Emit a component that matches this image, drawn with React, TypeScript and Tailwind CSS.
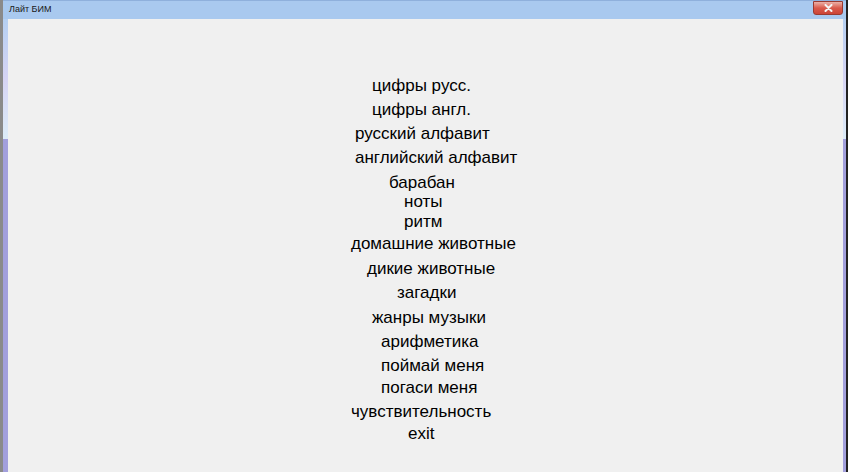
import React from "react";

const items: { label: string; left: number; top: number }[] = [
  { label: "цифры русс.", left: 372, top: 0 },
  { label: "цифры англ.", left: 372, top: 24 },
  { label: "русский алфавит", left: 355, top: 24 },
  { label: "английский алфавит", left: 355, top: 24 },
  { label: "барабан", left: 389, top: 25 },
  { label: "ноты", left: 404, top: 19 },
  { label: "ритм", left: 404, top: 20 },
  { label: "домашние животные", left: 351, top: 22 },
  { label: "дикие животные", left: 367, top: 25 },
  { label: "загадки", left: 397, top: 24 },
  { label: "жанры музыки", left: 372, top: 25 },
  { label: "арифметика", left: 381, top: 24 },
  { label: "поймай меня", left: 381, top: 24 },
  { label: "погаси меня", left: 381, top: 22 },
  { label: "чувствительность", left: 351, top: 24 },
  { label: "exit", left: 408, top: 22 },
];

export default function App() {
  return (
    <div className="w-[848px] h-[472px] flex bg-[#f0f0f0] overflow-hidden">
      <div className="w-[3px] bg-[#8a8a8a]" />
      <div className="flex-1 flex flex-col">
        {/* title bar */}
        <div className="h-[19px] bg-[#a9c9ef] flex items-start justify-between border-t border-[#8fb0dc]">
          <span
            className="pl-[6px] pt-[2px] text-[9px] leading-[12px] text-[#1a1a1a]"
            style={{ fontFamily: '"Liberation Sans", Arial, sans-serif' }}
          >
            Лайт БИМ
          </span>
          <div className="mr-[3px] w-[30px] h-[14px] rounded-b-[3px] border border-[#9a3a30] bg-gradient-to-b from-[#eab0a8] via-[#d9594b] to-[#cc4436] flex items-center justify-center">
            <svg width="9" height="8" viewBox="0 0 9 8">
              <path d="M1.5 1 L7.5 7 M7.5 1 L1.5 7" stroke="#f4f4f4" strokeWidth="2" strokeLinecap="round" />
            </svg>
          </div>
        </div>
        <div className="flex-1 flex">
          <div className="w-[5px] flex flex-col">
            <div className="h-[120px] bg-gradient-to-b from-[#b5d0f2] via-[#d6d4f4] to-[#dcecf8]" />
            <div className="flex-1 bg-[#a29fdc]" />
          </div>
          <div className="flex-1 bg-[#f0f0f0] pt-[57px]">
            <div
              className="flex flex-col items-start text-[17px] leading-[19px] text-[#000]"
              style={{ fontFamily: '"Liberation Sans", Arial, sans-serif' }}
            >
              {items.map((it, i) => (
                <div
                  key={i}
                  className="whitespace-nowrap"
                  style={{ marginLeft: it.left - 8, marginTop: i === 0 ? 0 : it.top - 19 }}
                >
                  {it.label}
                </div>
              ))}
            </div>
          </div>
          <div className="w-[3px] flex flex-col">
            <div className="h-[120px] bg-gradient-to-b from-[#b5d0f2] via-[#d6d4f4] to-[#dcecf8]" />
            <div className="flex-1 bg-[#a29fdc]" />
          </div>
        </div>
      </div>
      <div className="w-[2px] bg-[#222222]" />
    </div>
  );
}
